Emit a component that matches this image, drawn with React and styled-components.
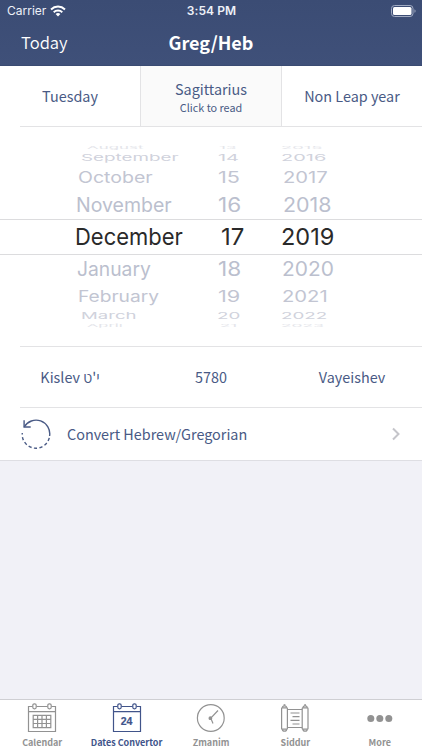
import styled, { createGlobalStyle, css } from "styled-components";

const GlobalStyle = createGlobalStyle`
  * {
    box-sizing: border-box;
  }
  body {
    margin: 0;
    background-color: #f1f1f7;
    font-family: "Noto Sans CJK SC", "Open Sans", sans-serif;
    color: #495a85;
  }
`;

const Screen = styled.div`
  width: 422px;
  height: 750px;
  display: flex;
  flex-direction: column;
  overflow: hidden;
`;

const Header = styled.header`
  height: 66px;
  background: linear-gradient(#3b4c74, #3f5079);
  border-bottom: 1px solid #3a4b72;
  color: white;
  flex-shrink: 0;
`;
const StatusBar = styled.div`
  height: 22px;
  padding: 0 6px 0 7px;
  display: grid;
  grid-template-columns: 1fr auto 1fr;
  align-items: center;
  font-family: Inter, sans-serif;
  font-size: 12px;
  line-height: 22px;
  color: #eef1f8;
`;
const Carrier = styled.div`
  display: flex;
  align-items: center;
  gap: 4px;
`;
const Time = styled.div`
  font-weight: 600;
  letter-spacing: 0.1px;
`;
const Battery = styled.div`
  display: flex;
  justify-content: flex-end;
`;
const NavBar = styled.div`
  height: 40px;
  padding: 0 21px;
  display: grid;
  grid-template-columns: 1fr auto 1fr;
  align-items: center;
`;
const NavButton = styled.div`
  font-size: 16.6px;
  font-weight: 350;
  line-height: 40px;
`;
const Title = styled.div`
  font-size: 18px;
  font-weight: 700;
  line-height: 40px;
`;

const Panel = styled.main`
  background-color: white;
  border-bottom: 1px solid #dedee3;
`;
const divider = css`
  background-image: linear-gradient(#e3e3e5, #e3e3e5);
  background-size: calc(100% - 20px) 1px;
  background-position: right bottom;
  background-repeat: no-repeat;
`;
const InfoRow = styled.div`
  height: 61px;
  display: grid;
  grid-template-columns: 140px 142px 140px;
  ${divider}
`;
const InfoCell = styled.div`
  display: flex;
  flex-direction: column;
  align-items: center;
  justify-content: center;
  padding-bottom: 1px;
  font-size: 14.4px;
  line-height: 20px;
  white-space: nowrap;
  ${(props) =>
    props.$active &&
    css`
      padding: 2px 0 0;
      background-color: #fafafa;
      border: 1px solid #e3e3e5;
      border-top: none;
    `}
`;
const Hint = styled.div`
  font-size: 10.8px;
  line-height: 16px;
`;

const Picker = styled.div`
  height: 220px;
  padding-top: 16px;
  font-family: Inter, sans-serif;
  ${divider}
`;
const PickerRow = styled.div`
  height: ${(props) => props.$height}px;
  display: grid;
  grid-template-columns: 217px 64px 141px;
  grid-template-rows: 100%;
  color: ${(props) => props.$color};
  ${(props) =>
    props.$selected &&
    css`
      border-top: 1px solid #dcdcde;
      border-bottom: 1px solid #dcdcde;
    `}
`;
const PickerCell = styled.div`
  display: flex;
  align-items: center;
  padding-left: ${(props) => props.$inset}px;
`;
const PickerText = styled.span`
  flex-shrink: 0;
  font-size: 23.5px;
  line-height: 28px;
  white-space: nowrap;
  transform: scale(${(props) => props.$sx}, ${(props) => props.$sy});
  transform-origin: left center;
`;

const ConvertRow = styled.div`
  height: 52px;
  padding: 0 21px;
  display: flex;
  align-items: center;
  font-size: 14.4px;
  line-height: 20px;
`;
const ConvertLabel = styled.div`
  flex: 1;
  margin-left: 16px;
`;

const Spacer = styled.div`
  flex: 1;
`;
const TabBar = styled.nav`
  height: 51px;
  display: grid;
  grid-template-columns: repeat(5, minmax(0, 1fr));
  background-color: white;
  border-top: 1px solid #cfcfd3;
`;
const Tab = styled.div`
  display: flex;
  flex-direction: column;
  align-items: center;
  padding-top: 3px;
  color: ${(props) => (props.$active ? "#41548a" : "#929292")};
  font-size: 9px;
  font-weight: 700;
  line-height: 14px;
  white-space: nowrap;

  svg {
    margin-bottom: 3px;
  }
`;

const WifiIcon = () => (
  <svg width="16" height="12" viewBox="0 0 16 12" fill="none" stroke="white">
    <path d="M1 4.4a10.2 10.2 0 0 1 14 0" strokeWidth="2" />
    <path d="M3.7 7.2a6.3 6.3 0 0 1 8.6 0" strokeWidth="1.9" />
    <path d="M8 11.5 5.6 9.1a3.5 3.5 0 0 1 4.8 0z" fill="white" stroke="none" />
  </svg>
);

const BatteryIcon = () => (
  <svg width="25" height="12" viewBox="0 0 25 12" fill="none">
    <rect x="0.5" y="0.5" width="21.5" height="11" rx="3" stroke="#a1abc2" />
    <rect x="2" y="2" width="18.5" height="8" rx="1.5" fill="white" />
    <path d="M23.5 4.2v3.6c1.4-.5 1.4-3.1 0-3.6" fill="#a1abc2" />
  </svg>
);

const ConvertIcon = () => (
  <svg width="30" height="30" viewBox="0 0 30 30" fill="none" stroke="#495a85" strokeWidth="1.4">
    <path d="M3.2 8A13.7 13.7 0 0 1 28.6 17" />
    <path d="M3.1 1.3V8h6.6" />
    <path d="M28.6 17A13.7 13.7 0 0 1 1.3 14" strokeDasharray="3.2 2.4" strokeDashoffset="-2" />
  </svg>
);

const ChevronIcon = () => (
  <svg width="10" height="14" viewBox="0 0 10 14" fill="none" stroke="#c5c5ca" strokeWidth="2">
    <path d="m2 1.5 5.5 5.5L2 12.5" />
  </svg>
);

const CalendarFrame = ({ children }) => (
  <svg width="30" height="30" viewBox="0 0 30 30" fill="none" stroke="currentColor" strokeWidth="1.2">
    <path d="M5.5 3.5h-4v25h27v-25h-4M9.5 3.5h11M1.5 8.7h27" />
    <rect x="5.8" y="0.8" width="3.4" height="5" rx="1.5" />
    <rect x="20.8" y="0.8" width="3.4" height="5" rx="1.5" />
    {children}
  </svg>
);

const CalendarIcon = () => (
  <CalendarFrame>
    <path d="M6.2 12.3h17.6v12.3H6.2zM6.2 16.4h17.6M6.2 20.5h17.6M10.6 12.3v12.3M15 12.3v12.3M19.4 12.3v12.3" />
  </CalendarFrame>
);

const DatesIcon = () => (
  <CalendarFrame>
    <text
      x="14.6"
      y="22.2"
      textAnchor="middle"
      fontFamily="Liberation Sans, sans-serif"
      fontSize="10.5"
      fill="currentColor"
      strokeWidth="0.2"
    >
      24
    </text>
  </CalendarFrame>
);

const ZmanimIcon = () => (
  <svg width="30" height="30" viewBox="0 0 30 30" fill="none" stroke="currentColor" strokeWidth="1.2">
    <circle cx="14.8" cy="15" r="13.4" />
    <path d="m22 7.5-7.2 7.7 2.2 5.2" />
    <circle cx="14.4" cy="15.2" r="1.3" fill="currentColor" />
  </svg>
);

const Roller = ({ x }) => (
  <g transform={`translate(${x} 0)`}>
    <rect x="0" y="4.8" width="5.8" height="21.4" rx="0.8" />
    <path d="M0.8 4.8a2.1 2 0 0 1 4.2 0M0.8 26.2a2.1 2 0 0 0 4.200 0" />
    <path d="M2.9 1.2v1.5" strokeWidth="1.8" />
  </g>
);

const SiddurIcon = () => (
  <svg width="30" height="30" viewBox="0 0 30 30" fill="none" stroke="currentColor" strokeWidth="1.2">
    <Roller x={1.6} />
    <Roller x={22.2} />
    <path d="M7.4 6.5h14.8M7.4 24.5h14.8" />
    <path d="M10.5 10h9M12.5 13.6h7M10.5 17.3h9M12.5 21h7" />
  </svg>
);

const MoreIcon = () => (
  <svg width="30" height="30" viewBox="0 0 30 30" fill="currentColor">
    <circle cx="5.8" cy="15.5" r="3.5" />
    <circle cx="14.8" cy="15.5" r="3.5" />
    <circle cx="23.8" cy="15.5" r="3.5" />
  </svg>
);

// each cell is [label, inset from its column, horizontal scale]
const pickerRows = [
  { height: 9, sy: 0.16, color: "#e4e5ea", cells: [["August", 87, 0.72], ["13", 2, 0.72], ["2015", 0, 0.78]] },
  { height: 12, sy: 0.4, color: "#d0d2dc", cells: [["September", 81, 0.8], ["14", 1, 0.85], ["2016", 0, 0.85]] },
  { height: 27, sy: 0.67, color: "#c2c5d2", cells: [["October", 78, 0.83], ["15", 1, 0.92], ["2017", 2, 0.86]] },
  { height: 28, sy: 0.84, color: "#bbbfce", cells: [["November", 76, 0.83], ["16", 1, 0.96], ["2018", 2, 0.91]] },
  { height: 36, sy: 1, color: "#2a2a2a", selected: true, cells: [["December", 75, 0.935], ["17", 4, 1.02], ["2019", 0, 1]] },
  { height: 28, sy: 0.84, color: "#bbbfce", cells: [["January", 77, 0.82], ["18", 1, 0.96], ["2020", 1, 0.89]] },
  { height: 28, sy: 0.67, color: "#c2c5d2", cells: [["February", 78, 0.814], ["19", 1, 0.92], ["2021", 1, 0.86]] },
  { height: 10, sy: 0.4, color: "#d0d2dc", cells: [["March", 81, 0.79], ["20", 0, 0.8], ["2022", 0, 0.8]] },
  { height: 10, sy: 0.16, color: "#e4e5ea", cells: [["April", 87, 0.7], ["21", 3, 0.72], ["2023", 0, 0.74]] },
];

const tabs = [
  { label: "Calendar", Icon: CalendarIcon },
  { label: "Dates Convertor", Icon: DatesIcon, active: true },
  { label: "Zmanim", Icon: ZmanimIcon },
  { label: "Siddur", Icon: SiddurIcon },
  { label: "More", Icon: MoreIcon },
];

const App = () => {
  return (
    <Screen>
      <GlobalStyle />
      <Header>
        <StatusBar>
          <Carrier>
            Carrier
            <WifiIcon />
          </Carrier>
          <Time>3:54 PM</Time>
          <Battery>
            <BatteryIcon />
          </Battery>
        </StatusBar>
        <NavBar>
          <NavButton>Today</NavButton>
          <Title>Greg/Heb</Title>
        </NavBar>
      </Header>
      <Panel>
        <InfoRow>
          <InfoCell>Tuesday</InfoCell>
          <InfoCell $active>
            Sagittarius
            <Hint>Click to read</Hint>
          </InfoCell>
          <InfoCell>Non Leap year</InfoCell>
        </InfoRow>
        <Picker>
          {pickerRows.map((row) => (
            <PickerRow key={row.cells[0][0]} $height={row.height} $color={row.color} $selected={row.selected}>
              {row.cells.map(([label, inset, sx]) => (
                <PickerCell key={label} $inset={inset}>
                  <PickerText $sx={sx} $sy={row.sy}>
                    {label}
                  </PickerText>
                </PickerCell>
              ))}
            </PickerRow>
          ))}
        </Picker>
        <InfoRow>
          <InfoCell>Kislev י'ט</InfoCell>
          <InfoCell>5780</InfoCell>
          <InfoCell>Vayeishev</InfoCell>
        </InfoRow>
        <ConvertRow>
          <ConvertIcon />
          <ConvertLabel>Convert Hebrew/Gregorian</ConvertLabel>
          <ChevronIcon />
        </ConvertRow>
      </Panel>
      <Spacer />
      <TabBar>
        {tabs.map(({ label, Icon, active }) => (
          <Tab key={label} $active={active}>
            <Icon />
            {label}
          </Tab>
        ))}
      </TabBar>
    </Screen>
  );
};

export default App;
